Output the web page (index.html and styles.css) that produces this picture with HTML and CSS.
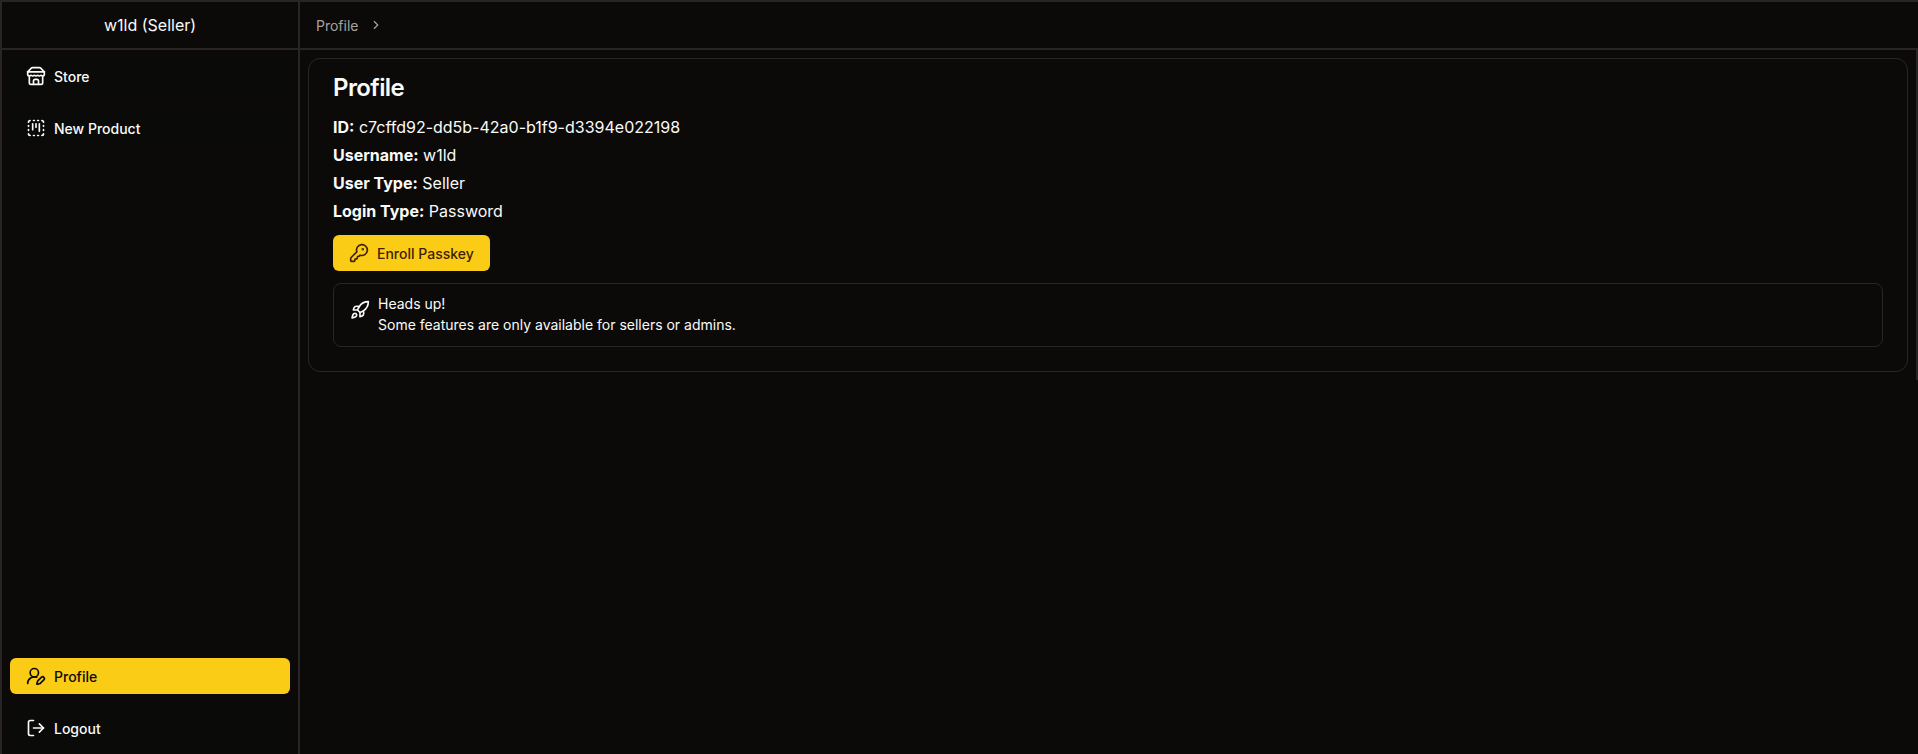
FILE: index.html
```html
<!DOCTYPE html>
<html lang="en">
<head>
  <meta charset="UTF-8" />
  <meta name="viewport" content="width=device-width, initial-scale=1" />
  <title>Profile</title>
  <link rel="stylesheet" href="styles.css">
</head>
<body>
  <div class="app">
    <aside class="sidebar">
      <div class="sidebar-head">w1ld (Seller)</div>
      <nav class="sidebar-nav">
        <div class="nav-group">
          <a class="nav-item" href="#">
            <svg class="icon" viewBox="0 0 24 24"><path d="m2 7 4.41-4.41A2 2 0 0 1 7.83 2h8.34a2 2 0 0 1 1.42.59L22 7"/><path d="M4 12v8a2 2 0 0 0 2 2h12a2 2 0 0 0 2-2v-8"/><path d="M15 22v-4a2 2 0 0 0-2-2h-2a2 2 0 0 0-2 2v4"/><path d="M2 7h20"/><path d="M22 7v3a2 2 0 0 1-2 2a2.7 2.7 0 0 1-1.59-.63.7.7 0 0 0-.82 0A2.7 2.7 0 0 1 16 12a2.7 2.7 0 0 1-1.59-.63.7.7 0 0 0-.82 0A2.7 2.7 0 0 1 12 12a2.7 2.7 0 0 1-1.59-.63.7.7 0 0 0-.82 0A2.7 2.7 0 0 1 8 12a2.7 2.7 0 0 1-1.59-.63.7.7 0 0 0-.82 0A2.7 2.7 0 0 1 4 12a2 2 0 0 1-2-2V7"/></svg>
            Store
          </a>
          <a class="nav-item" href="#">
            <svg class="icon" viewBox="0 0 24 24"><path d="M8 7v7"/><path d="M12 7v4"/><path d="M16 7v9"/><path d="M5 3a2 2 0 0 0-2 2"/><path d="M9 3h1"/><path d="M14 3h1"/><path d="M19 3a2 2 0 0 1 2 2"/><path d="M21 9v1"/><path d="M21 14v1"/><path d="M21 19a2 2 0 0 1-2 2"/><path d="M14 21h1"/><path d="M9 21h1"/><path d="M5 21a2 2 0 0 1-2-2"/><path d="M3 14v1"/><path d="M3 9v1"/></svg>
            New Product
          </a>
        </div>
        <div class="nav-group">
          <a class="nav-item active" href="#">
            <svg class="icon" viewBox="0 0 24 24"><path d="M2 21a8 8 0 0 1 10.821-7.487"/><path d="M21.378 16.626a1 1 0 0 0-3.004-3.004l-4.01 4.012a2 2 0 0 0-.506.854l-.837 2.87a.5.5 0 0 0 .62.62l2.87-.837a2 2 0 0 0 .854-.506z"/><circle cx="10" cy="8" r="5"/></svg>
            Profile
          </a>
          <a class="nav-item" href="#">
            <svg class="icon" viewBox="0 0 24 24"><path d="m16 17 5-5-5-5"/><path d="M21 12H9"/><path d="M9 21H5a2 2 0 0 1-2-2V5a2 2 0 0 1 2-2h4"/></svg>
            Logout
          </a>
        </div>
      </nav>
    </aside>

    <main class="main">
      <header class="topbar">
        <span>Profile</span>
        <svg class="chevron" viewBox="0 0 24 24"><path d="m9 18 6-6-6-6"/></svg>
      </header>
      <div class="content">
        <section class="card">
          <h2>Profile</h2>
          <div class="info-list">
            <p><strong>ID:</strong> c7cffd92-dd5b-42a0-b1f9-d3394e022198</p>
            <p><strong>Username:</strong> w1ld</p>
            <p><strong>User Type:</strong> Seller</p>
            <p><strong>Login Type:</strong> Password</p>
          </div>
          <button class="btn" type="button">
            <svg class="icon" viewBox="0 0 24 24"><path d="M2.586 17.414A2 2 0 0 0 2 18.828V21a1 1 0 0 0 1 1h3a1 1 0 0 0 1-1v-1a1 1 0 0 1 1-1h1a1 1 0 0 0 1-1v-1a1 1 0 0 1 1-1h.172a2 2 0 0 0 1.414-.586l.814-.814a6.5 6.5 0 1 0-4-4z"/><circle cx="16.5" cy="7.5" r=".5"/></svg>
            Enroll Passkey
          </button>
          <div class="alert">
            <svg class="icon" viewBox="0 0 24 24"><path d="M4.5 16.5c-1.5 1.26-2 5-2 5s3.74-.5 5-2c.71-.84.7-2.13-.09-2.91a2.18 2.18 0 0 0-2.91-.09z"/><path d="m12 15-3-3a22 22 0 0 1 2-3.95A12.88 12.88 0 0 1 22 2c0 2.72-.78 7.5-6 11a22.35 22.35 0 0 1-4 2z"/><path d="M9 12H4s.55-3.03 2-4c1.62-1.08 5 0 5 0"/><path d="M12 15v5s3.03-.55 4-2c1.08-1.62 0-5 0-5"/></svg>
            <div>
              <div>Heads up!</div>
              <div>Some features are only available for sellers or admins.</div>
            </div>
          </div>
        </section>
      </div>
    </main>
  </div>
</body>
</html>
```

FILE: styles.css
```css
* {
  box-sizing: border-box;
}

body {
  margin: 0;
  font-family: 'Inter', 'Liberation Sans', sans-serif;
  background: #0c0a09;
  color: #fafaf9;
}

.app {
  display: flex;
  height: 754px;
  overflow: hidden;
  border-top: 2px solid #292524;
  border-left: 2px solid #292524;
}

.icon {
  width: 20px;
  height: 20px;
  flex-shrink: 0;
  fill: none;
  stroke: currentColor;
  stroke-width: 2;
  stroke-linecap: round;
  stroke-linejoin: round;
}

.sidebar {
  width: 298px;
  flex-shrink: 0;
  display: flex;
  flex-direction: column;
  border-right: 2px solid #292524;
}

.sidebar-head {
  height: 48px;
  flex-shrink: 0;
  display: flex;
  align-items: center;
  justify-content: center;
  font-size: 16px;
  border-bottom: 2px solid #292524;
}

.sidebar-nav {
  flex: 1;
  display: flex;
  flex-direction: column;
  justify-content: space-between;
  padding: 8px;
}

.nav-group {
  display: flex;
  flex-direction: column;
  gap: 16px;
}

.nav-item {
  height: 36px;
  display: flex;
  align-items: center;
  gap: 8px;
  padding: 0 16px;
  border-radius: 6px;
  font-size: 14px;
  font-weight: 500;
  color: #fafaf9;
  text-decoration: none;
  background: #0a0a09;
}

.nav-item.active {
  background: #facc15;
  color: #0c0a09;
}

.main {
  flex: 1;
  min-width: 0;
}

.topbar {
  height: 46px;
  display: flex;
  align-items: center;
  gap: 8px;
  padding: 0 16px;
  font-size: 14px;
  color: #a8a29e;
}

.chevron {
  width: 14px;
  height: 14px;
  margin-left: 2px;
  fill: none;
  stroke: currentColor;
  stroke-width: 2;
  stroke-linecap: round;
  stroke-linejoin: round;
}

.content {
  padding: 8px;
  border-top: 2px solid #292524;
  border-right: 2px solid #292524;
}

.card {
  padding: 13px 24px 24px;
  border: 1px solid #292524;
  border-radius: 12px;
}

.card h2 {
  margin: 0;
  font-size: 24px;
  line-height: 32px;
  font-weight: 600;
  letter-spacing: -0.6px;
}

.info-list {
  margin-top: 9px;
}

.info-list p {
  margin: 0;
  font-size: 16px;
  line-height: 28px;
}

.info-list strong {
  font-weight: 700;
}

.btn {
  height: 36px;
  margin-top: 10px;
  display: flex;
  align-items: center;
  gap: 8px;
  padding: 0 16px;
  border: none;
  border-radius: 6px;
  background: #facc15;
  color: #422006;
  font-family: inherit;
  font-size: 14px;
  font-weight: 500;
}

.alert {
  margin-top: 12px;
  display: flex;
  gap: 8px;
  padding: 9px 16px 11px;
  border: 1px solid #292524;
  border-radius: 8px;
  font-size: 14px;
  line-height: 21px;
}

.alert .icon {
  margin-top: 7px;
}
```
